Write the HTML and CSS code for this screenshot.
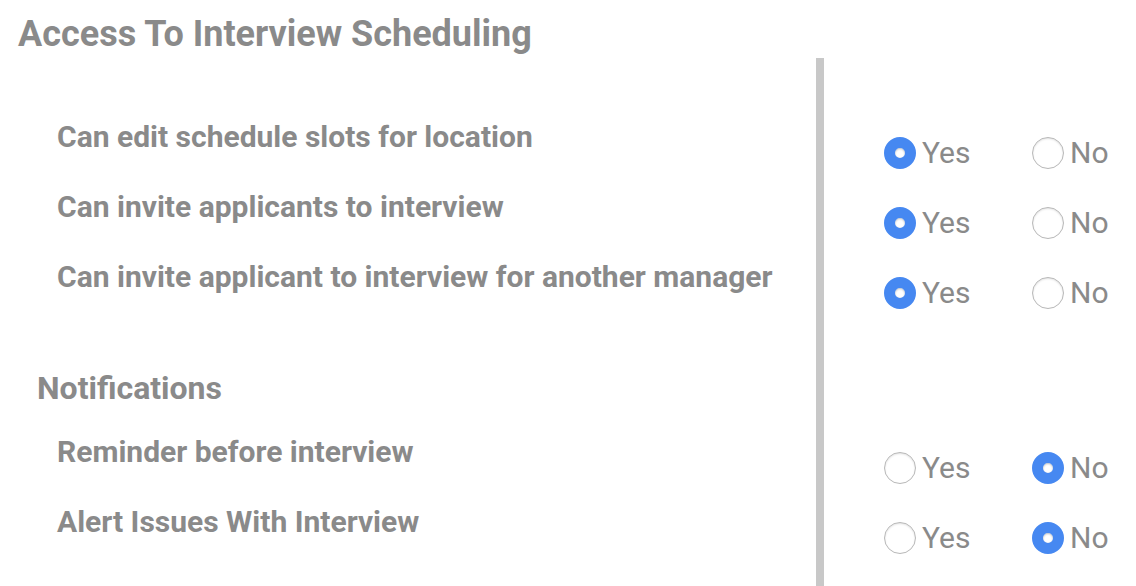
FILE: index.html
```html
<!DOCTYPE html>
<html>
<head>
<meta charset="utf-8">
<link rel="stylesheet" href="styles.css">
</head>
<body>
<h1 class="title">Access To Interview Scheduling</h1>
<div class="grid">
  <div class="divider"></div>

  <div class="label first">Can edit schedule slots for location</div>
  <div class="opts first"><label class="opt"><input type="radio" name="r1" checked><span>Yes</span></label><label class="opt"><input type="radio" name="r1"><span>No</span></label></div>

  <div class="label">Can invite applicants to interview</div>
  <div class="opts"><label class="opt"><input type="radio" name="r2" checked><span>Yes</span></label><label class="opt"><input type="radio" name="r2"><span>No</span></label></div>

  <div class="label">Can invite applicant to interview for another manager</div>
  <div class="opts"><label class="opt"><input type="radio" name="r3" checked><span>Yes</span></label><label class="opt"><input type="radio" name="r3"><span>No</span></label></div>

  <div class="section">Notifications</div>
  <div class="spacer"></div>

  <div class="label">Reminder before interview</div>
  <div class="opts"><label class="opt"><input type="radio" name="r4"><span>Yes</span></label><label class="opt"><input type="radio" name="r4" checked><span>No</span></label></div>

  <div class="label last">Alert Issues With Interview</div>
  <div class="opts last"><label class="opt"><input type="radio" name="r5"><span>Yes</span></label><label class="opt"><input type="radio" name="r5" checked><span>No</span></label></div>
</div>
</body>
</html>
```
FILE: styles.css
```css
html, body {
  margin: 0;
  padding: 0;
  background: #fff;
}
body {
  font-family: Roboto, "Liberation Sans", sans-serif;
  color: #8a8a8a;
  width: 1136px;
  height: 586px;
  overflow: hidden;
}
.title {
  margin: 0;
  padding: 12px 0 0 18px;
  height: 44px;
  box-sizing: border-box;
  font-size: 36px;
  line-height: 44px;
  font-weight: 700;
}
.grid {
  display: grid;
  grid-template-columns: 816px 8px 1fr;
}
.divider {
  grid-column: 2;
  grid-row: 1 / span 7;
  background: #c8c8c8;
  margin-top: 14px;
}
.label {
  grid-column: 1;
  padding-left: 57px;
  height: 70px;
  line-height: 70px;
  font-size: 30px;
  font-weight: 700;
  white-space: nowrap;
}
.first { margin-top: 58px; }
.last { margin-bottom: 40px; }
.opts {
  grid-column: 3;
  padding-left: 60px;
  padding-top: 35px;
  height: 70px;
  box-sizing: border-box;
  display: flex;
}
.section {
  grid-column: 1;
  padding-left: 37px;
  margin-top: 56px;
  height: 49px;
  line-height: 40px;
  font-size: 32px;
  font-weight: 700;
}
.spacer { grid-column: 3; }
.opt {
  display: flex;
  align-items: center;
  width: 148px;
  height: 32px;
  font-size: 30px;
  gap: 6px;
}
.opt span { margin-top: -1px; }
.opt input {
  appearance: none;
  -webkit-appearance: none;
  margin: 0;
  width: 32px;
  height: 32px;
  border-radius: 50%;
  border: 1px solid #b8b8b8;
  box-sizing: border-box;
  background: #fff;
  box-shadow: inset 0 1px 2px rgba(0,0,0,0.12);
  flex: none;
}
.opt input:checked {
  border: 11px solid #4688f1;
  background: #fff;
  box-shadow: inset 0 1px 2px rgba(0,0,0,0.25);
}
```
